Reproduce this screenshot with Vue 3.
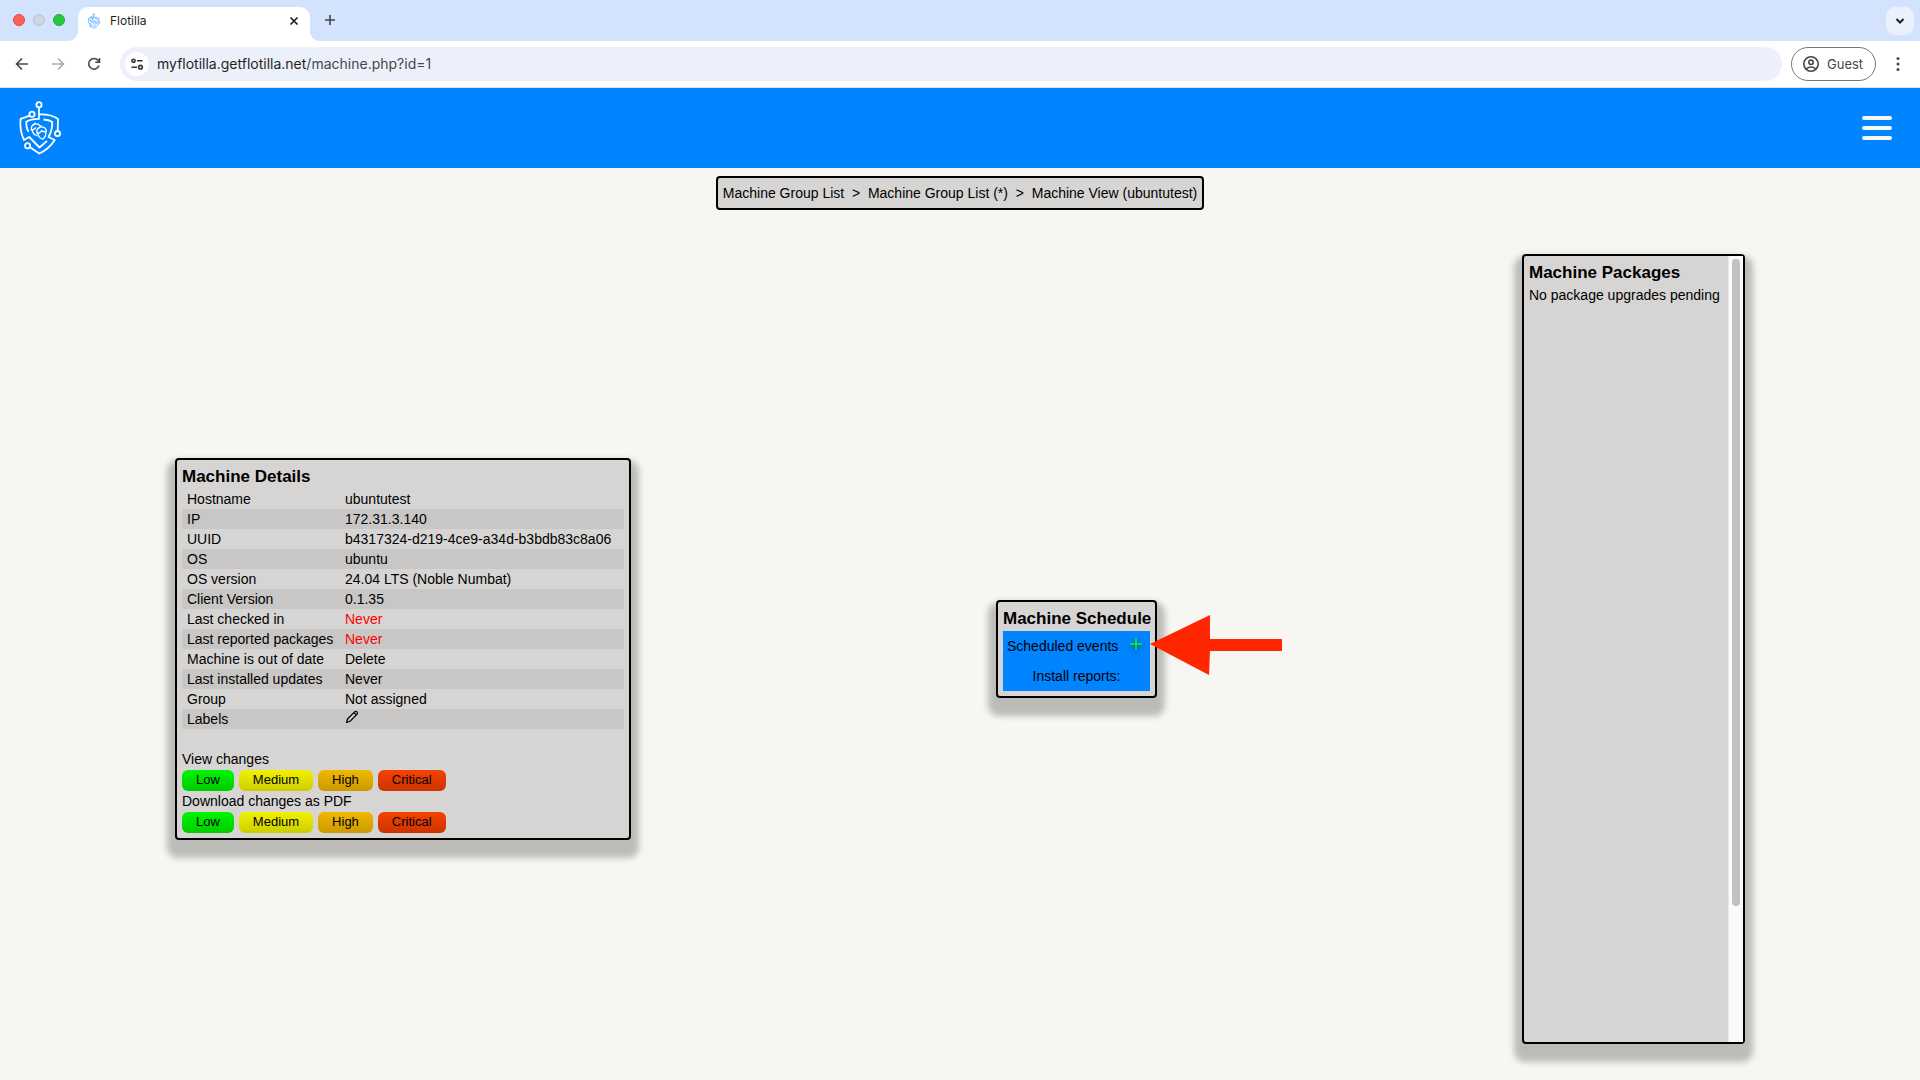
<script setup>
const details = [
  { label: 'Hostname', value: 'ubuntutest' },
  { label: 'IP', value: '172.31.3.140' },
  { label: 'UUID', value: 'b4317324-d219-4ce9-a34d-b3bdb83c8a06' },
  { label: 'OS', value: 'ubuntu' },
  { label: 'OS version', value: '24.04 LTS (Noble Numbat)' },
  { label: 'Client Version', value: '0.1.35' },
  { label: 'Last checked in', value: 'Never', alert: true },
  { label: 'Last reported packages', value: 'Never', alert: true },
  { label: 'Machine is out of date', value: 'Delete', href: '#delete' },
  { label: 'Last installed updates', value: 'Never' },
  { label: 'Group', value: 'Not assigned', href: '#group' },
  { label: 'Labels', edit: true },
]
const levels = ['Low', 'Medium', 'High', 'Critical']
const sections = ['View changes', 'Download changes as PDF']
</script>

<template>
  <div class="window">
    <svg class="defs" width="0" height="0" aria-hidden="true">
      <symbol id="flotilla" viewBox="0 0 44 56" fill="none" stroke="currentColor">
        <g stroke-width="1.8" stroke-linejoin="round">
          <circle cx="21" cy="4.7" r="2.6" />
          <path d="M21 7.3V18.9Q12.500 19 8.300 21.800Q8 28 10.600 31.800" />
          <circle cx="14" cy="14.300" r="2.600" />
          <path d="M11.500 15.700Q7 17.500 2.600 18.800Q1.300 30 6 40L11.200 37L21.500 47.500L29 40.800" />
          <path d="M21 14.500Q33 14 40 19L39.700 31" />
          <circle cx="39.500" cy="33.600" r="2.600" />
          <path d="M25.500 19.500Q31 19.800 34.200 22Q34.500 30 30.500 37L36.800 40Q31 49 21.300 53.500L12 47.200" />
          <circle cx="9.600" cy="45.700" r="2.600" />
        </g>
        <g stroke-width="1.300" stroke-linejoin="round">
          <path d="M19.500 36Q14.500 34.500 14.300 30M22.500 26.500Q21 23.500 17 24Q13 25 13.300 30Q16 30 18 27.500M17 24V22.500" />
          <path d="M19 33.500Q18 28 22.800 27Q27.500 26.500 28.500 31.500Q25.500 32.500 23.800 30.500Q22 33.500 19 33.500ZM20 33.500Q20.500 38 24.500 39.200Q28.500 36.500 27.800 32M22.800 27L23.300 25.300" />
        </g>
      </symbol>
    </svg>

    <div class="tabstrip">
      <div class="lights"><i class="red"></i><i class="grey"></i><i class="green"></i></div>
      <div class="tab">
        <svg class="favicon"><use href="#flotilla" /></svg>
        <span class="tab-title">Flotilla</span>
        <button class="bare" aria-label="Close tab">
          <svg width="10" height="10" viewBox="0 0 10 10"><path d="M1.500 1.500l7 7M8.500 1.500l-7 7" stroke="#1f1f1f" stroke-width="1.700" /></svg>
        </button>
      </div>
      <button class="bare new-tab" aria-label="New tab">
        <svg width="12" height="12" viewBox="0 0 12 12"><path d="M6 1v10M1 6h10" stroke="#444" stroke-width="1.600" /></svg>
      </button>
      <button class="bare tab-search" aria-label="Search tabs">
        <svg width="10" height="8" viewBox="0 0 10 8"><path d="M1.500 2l3.500 3.500L8.500 2" fill="none" stroke="#1f1f1f" stroke-width="2" /></svg>
      </button>
    </div>

    <div class="toolbar">
      <button class="bare nav" aria-label="Back">
        <svg width="14" height="14" viewBox="0 0 14 14"><path d="M13 7H2M7 1.500L1.500 7L7 12.500" fill="none" stroke="#474747" stroke-width="1.600" /></svg>
      </button>
      <button class="bare nav" aria-label="Forward">
        <svg width="14" height="14" viewBox="0 0 14 14"><path d="M1 7h11M7 1.500L12.500 7L7 12.500" fill="none" stroke="#ababab" stroke-width="1.600" /></svg>
      </button>
      <button class="bare nav" aria-label="Reload">
        <svg width="14" height="14" viewBox="0 0 14 14"><path d="M12 8.500A5.300 5.300 0 1 1 11 3.300L12.500 5M12.500 1V5.200H8.300" fill="none" stroke="#474747" stroke-width="1.600" /></svg>
      </button>
      <div class="omnibox">
        <span class="site-info">
          <svg width="14" height="12" viewBox="0 0 14 12" fill="none" stroke="#333" stroke-width="1.600"><circle cx="3.500" cy="2.800" r="1.600" /><path d="M7 2.800h5.500M1.500 9.200H7" /><circle cx="10.500" cy="9.200" r="1.800" /></svg>
        </span>
        <span class="url" role="textbox" aria-label="Address">myflotilla.getflotilla.net<span class="path">/machine.php?id=1</span></span>
      </div>
      <button class="guest">
        <svg width="16" height="16" viewBox="0 0 16 16" fill="none" stroke="#474747" stroke-width="1.600"><circle cx="8" cy="8" r="7.200" /><circle cx="8" cy="6.300" r="2.200" /><path d="M3 13Q8 9 13 13" /></svg>
        Guest
      </button>
      <button class="bare kebab" aria-label="Menu">
        <svg width="4" height="16" viewBox="0 0 4 16" fill="#474747"><circle cx="2" cy="2.500" r="1.500" /><circle cx="2" cy="8" r="1.500" /><circle cx="2" cy="13.500" r="1.500" /></svg>
      </button>
    </div>

    <header class="banner">
      <a class="logo" href="#home" aria-label="Flotilla"><svg width="44" height="56"><use href="#flotilla" /></svg></a>
      <button class="bare burger" aria-label="Open menu"><i></i><i></i><i></i></button>
    </header>

    <main>
      <nav class="crumbs">
        <a href="#groups">Machine Group List</a>&nbsp; &gt; &nbsp;<a href="#group-all">Machine Group List (*)</a>&nbsp; &gt; &nbsp;<a href="#machine">Machine View (ubuntutest)</a>
      </nav>

      <div class="cards">
        <section class="card">
          <h2>Machine Details</h2>
          <table class="details">
            <tbody>
              <tr v-for="row in details" :key="row.label">
                <th scope="row">{{ row.label }}</th>
                <td :class="{ alert: row.alert }">
                  <a v-if="row.href" :href="row.href">{{ row.value }}</a>
                  <button v-else-if="row.edit" class="bare edit" aria-label="Edit labels">
                    <svg width="14" height="14" viewBox="0 0 14 14" fill="none" stroke="#000" stroke-width="1.200" stroke-linejoin="round"><path d="M1.500 12.500L2.500 9L9.800 1.700Q11 .8 12 1.800Q13 2.800 12.200 4L5 11.300ZM9 2.500L11.300 4.800" /></svg>
                  </button>
                  <template v-else>{{ row.value }}</template>
                </td>
              </tr>
            </tbody>
          </table>
          <div class="changes">
            <template v-for="section in sections" :key="section">
              <p>{{ section }}</p>
              <div class="levels">
                <button v-for="level in levels" :key="level" :class="['level', level.toLowerCase()]">{{ level }}</button>
              </div>
            </template>
          </div>
        </section>

        <section class="card schedule">
          <h2>Machine Schedule</h2>
          <div class="panel">
            <div class="events">
              <span>Scheduled events</span>
              <button class="bare add" aria-label="Add event">
                <svg width="14" height="14" viewBox="0 0 14 14"><path d="M7 1v12M1 7h12" stroke="#00ff1e" stroke-width="1.400" /></svg>
              </button>
            </div>
            <div class="reports">Install reports:</div>
          </div>
          <svg class="arrow" width="132" height="60" viewBox="0 0 132 60"><path d="M0 29L60 0V24H132V36H60L59 60Z" fill="#ff2600" /></svg>
        </section>

        <section class="card packages">
          <div class="packages-body">
            <h2>Machine Packages</h2>
            <p>No package upgrades pending</p>
          </div>
          <div class="track"><div class="thumb"></div></div>
        </section>
      </div>
    </main>
  </div>
</template>

<style>
body {
  background: #f7f6f2;
}
</style>

<style scoped>
.window {
  min-height: 100vh;
  display: flex;
  flex-direction: column;
  font: 14px/20px "Liberation Sans", Arial, sans-serif;
  color: #000;
}
.defs {
  position: absolute;
}
a {
  color: inherit;
  text-decoration: none;
}
p,
h2 {
  margin: 0;
}
.bare {
  display: flex;
  align-items: center;
  justify-content: center;
  padding: 0;
  border: 0;
  background: none;
}

.tabstrip {
  display: flex;
  height: 41px;
  background: #d3e2fd;
}
.lights {
  display: flex;
  gap: 8px;
  padding: 14px 13px 0;
}
.lights i {
  width: 12px;
  height: 12px;
  border-radius: 50%;
  box-sizing: border-box;
}
.red {
  background: #fe5f57;
  border: 1px solid #e2463f;
}
.grey {
  background: #cfd6e2;
  border: 1px solid #bcc2cd;
}
.green {
  background: #28c840;
  border: 1px solid #1eac2d;
}
.tab {
  position: relative;
  display: flex;
  align-items: center;
  width: 232px;
  box-sizing: border-box;
  margin-top: 7px;
  padding: 0 11px 6px 8px;
  background: #fff;
  border-radius: 10px 10px 0 0;
}
.tab::before,
.tab::after {
  content: "";
  position: absolute;
  bottom: 0;
  width: 10px;
  height: 10px;
}
.tab::before {
  right: 100%;
  background: radial-gradient(circle at 0 0, transparent 10px, #fff 10px);
}
.tab::after {
  left: 100%;
  background: radial-gradient(circle at 100% 0, transparent 10px, #fff 10px);
}
.favicon {
  width: 16px;
  height: 16px;
  color: #0084ff;
}
.tab-title {
  flex: 1;
  padding-left: 8px;
  font: 12px/16px Inter, sans-serif;
  color: #1f1f1f;
}
.new-tab {
  width: 40px;
  height: 40px;
}
.tab-search {
  width: 28px;
  height: 28px;
  margin: 7px 6px 0 auto;
  background: #eaf1fe;
  border-radius: 9px;
}

.toolbar {
  display: flex;
  align-items: center;
  height: 46px;
  padding-left: 4px;
  background: #fff;
  border-bottom: 1px solid #dfe1e5;
}
.nav {
  width: 36px;
  height: 34px;
}
.omnibox {
  display: flex;
  flex: 1;
  align-items: center;
  height: 34px;
  margin-left: 8px;
  padding-left: 5px;
  border-radius: 17px;
  background: #ecf0fa;
}
.site-info {
  display: flex;
  align-items: center;
  justify-content: center;
  width: 24px;
  height: 24px;
  border-radius: 50%;
  background: #fff;
}
.url {
  padding-left: 8px;
  font: 14px/20px Inter, sans-serif;
  color: #1f1f1f;
}
.path {
  color: #474747;
}
.guest {
  display: flex;
  align-items: center;
  gap: 8px;
  width: 85px;
  height: 34px;
  margin-left: 9px;
  padding: 0 11px;
  border: 1px solid #747775;
  border-radius: 17px;
  background: #fff;
  font: 13px/20px Inter, sans-serif;
  color: #474747;
}
.guest svg {
  flex: none;
}
.kebab {
  width: 44px;
  height: 34px;
}

.banner {
  display: flex;
  align-items: center;
  justify-content: space-between;
  height: 80px;
  padding: 0 28px 0 18px;
  background: #0084ff;
}
.logo {
  display: flex;
  color: #fff;
}
.burger {
  flex-direction: column;
  gap: 6px;
}
.burger i {
  width: 30px;
  height: 4px;
  border-radius: 2px;
  background: #f7f6f2;
}

main {
  flex: 1;
  display: flex;
  flex-direction: column;
  align-items: center;
  padding-top: 8px;
  background: #f7f6f2;
}
.crumbs {
  padding: 5px;
  border: 2px solid #000;
  border-radius: 4px;
  background: #d7d5d3;
}
.cards {
  flex: 1;
  align-self: stretch;
  display: flex;
  align-items: center;
  justify-content: space-around;
  gap: 15px;
  padding: 44px 0 36px;
}
.card {
  position: relative;
  padding: 5px;
  border: 2px solid #000;
  border-radius: 4px;
  background: #d7d5d3;
  box-shadow: 0 10px 6px 8px rgba(0, 0, 0, 0.24);
}
h2 {
  font-size: 17px;
  line-height: 24px;
  white-space: nowrap;
}
.details {
  width: 442px;
  border-collapse: collapse;
}
.details th,
.details td {
  height: 20px;
  padding: 0 5px;
  font-weight: normal;
  text-align: left;
}
.details th {
  width: 148px;
}
.details tr:nth-child(even) {
  background: #c9c7c5;
}
.details .alert {
  color: #f00;
}
.edit {
  height: 16px;
  margin-bottom: 4px;
}
.changes {
  padding-top: 20px;
}
.levels {
  display: flex;
  gap: 5px;
  padding-top: 1px;
}
.level {
  height: 21px;
  padding: 0 14px 1px;
  border: 0;
  border-radius: 6px;
  font: 13px/20px "Liberation Sans", Arial, sans-serif;
  color: #000;
}
.low {
  background: linear-gradient(#00f500, #00cc00);
}
.medium {
  background: linear-gradient(#f2f200, #cccc00);
}
.high {
  background: linear-gradient(#f0b800, #cc9900);
}
.critical {
  background: linear-gradient(#f54200, #cc3300);
}

.schedule {
  width: 147px;
}
.panel {
  background: #0084ff;
}
.events {
  display: flex;
  align-items: center;
  justify-content: space-between;
  height: 30px;
  padding: 0 7px 0 4px;
}
.add {
  margin-bottom: 4px;
  filter: drop-shadow(0 2px 2px rgba(0, 0, 0, 0.5));
}
.reports {
  line-height: 30px;
  text-align: center;
}
.arrow {
  position: absolute;
  left: calc(100% - 5px);
  top: 13px;
}

.packages {
  display: flex;
  align-self: stretch;
  padding: 0;
}
.packages-body {
  min-width: 194px;
  padding: 5px;
}
.track {
  width: 15px;
  box-sizing: border-box;
  padding: 3px 4px 0 3px;
  border-left: 1px solid #e8e8e8;
  background: #fafafa;
}
.thumb {
  width: 8px;
  height: 647px;
  max-height: 90%;
  border-radius: 4px;
  background: #c1c1c1;
}
</style>
